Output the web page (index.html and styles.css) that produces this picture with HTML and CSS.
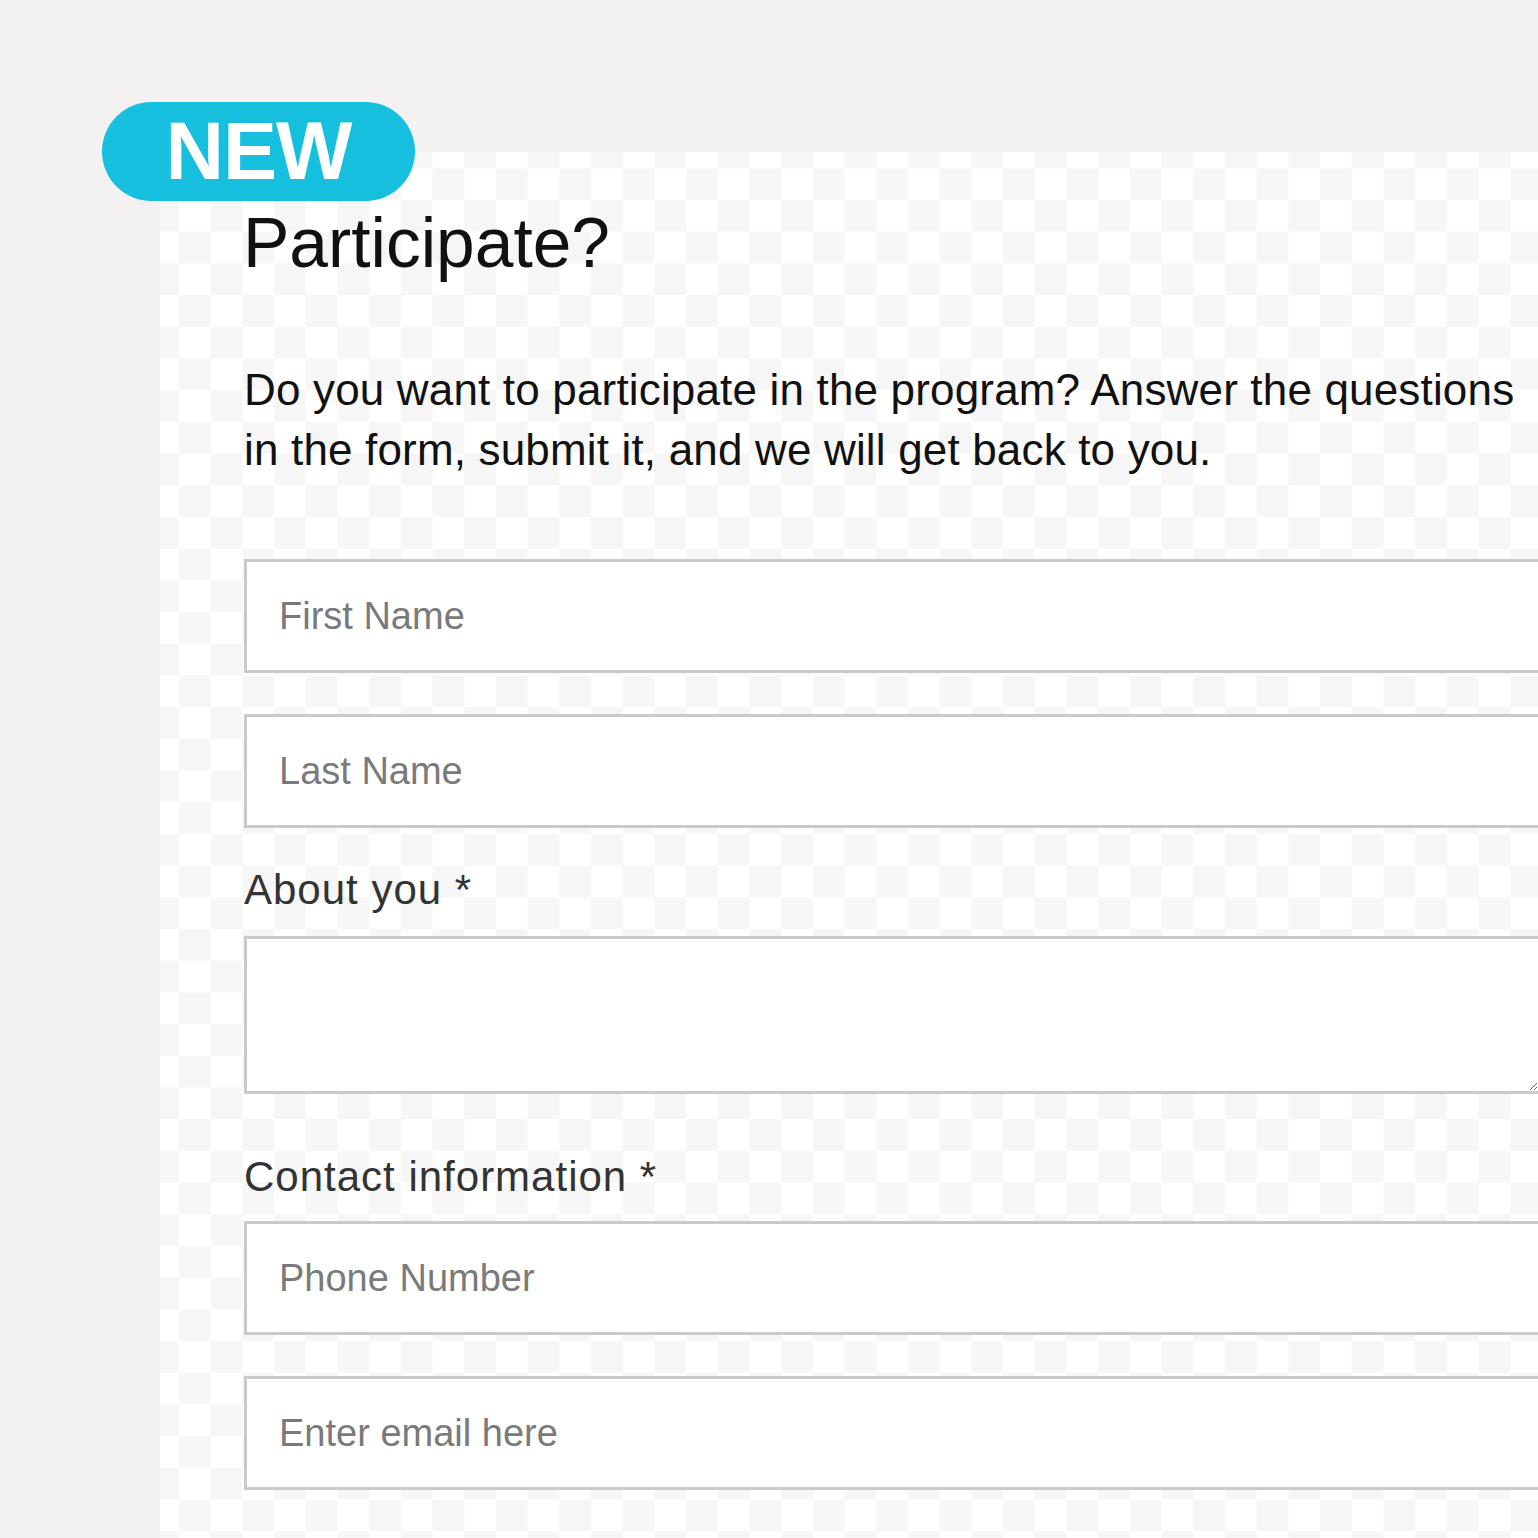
FILE: index.html
```html
<!DOCTYPE html>
<html lang="en">
<head>
<meta charset="utf-8">
<title>Participate?</title>
<link rel="stylesheet" href="styles.css">
</head>
<body>
<div class="badge">NEW</div>
<main class="panel">
  <h1 class="title">Participate?</h1>
  <p class="intro">Do you want to participate in the program? Answer the questions in the form, submit it, and we will get back to you.</p>
  <form class="form">
    <input class="field" type="text" placeholder="First Name">
    <input class="field" type="text" placeholder="Last Name">
    <label class="label label-about" for="about">About you *</label>
    <textarea class="field area" id="about"></textarea>
    <label class="label label-contact" for="phone">Contact information *</label>
    <input class="field" id="phone" type="tel" placeholder="Phone Number">
    <input class="field" type="email" placeholder="Enter email here">
  </form>
</main>
</body>
</html>
```
FILE: styles.css
```css
html, body {
  margin: 0;
  padding: 0;
}
body {
  width: 1538px;
  height: 1538px;
  overflow: hidden;
  background: #f3f1f2;
  font-family: "Liberation Sans", Arial, sans-serif;
  position: relative;
}
.badge {
  position: absolute;
  left: 102px;
  top: 102px;
  width: 313px;
  height: 99px;
  border-radius: 50px;
  background: #16bfdd;
  color: #fff;
  font-weight: 700;
  font-size: 81px;
  letter-spacing: -1px;
  display: flex;
  align-items: center;
  justify-content: center;
  line-height: 1;
  z-index: 2;
}
.panel {
  margin: 152px 0 0 160px;
  height: 1386px;
  box-sizing: border-box;
  padding: 57px 0 0 84px;
  background-color: #fff;
  background-image: repeating-conic-gradient(#f6f6f6 0 25%, #ffffff 0 50%);
  background-size: 63.4px 63.4px;
  background-position: -12.7px 16.3px;
  overflow: hidden;
}
.title {
  margin: 0 0 0 -1px;
  font-size: 69.5px;
  line-height: 69px;
  font-weight: 400;
  color: #111;
}
.intro {
  margin: 82px 0 0;
  width: 1300px;
  font-size: 44px;
  line-height: 60px;
  letter-spacing: 0.17px;
  color: #111;
}
.form {
  display: flex;
  flex-direction: column;
  margin-top: 79px;
}
.field {
  box-sizing: border-box;
  width: 1297px;
  height: 114px;
  margin: 0 0 41px;
  border: 3px solid #cacaca;
  border-radius: 0;
  background: #fff;
  padding: 0 0 0 32px;
  font-family: "Liberation Sans", Arial, sans-serif;
  font-size: 38px;
  color: #333;
  outline: none;
}
.field::placeholder {
  color: #7a7a7a;
}
.area {
  height: 158px;
  resize: both;
}
.label {
  display: block;
  font-size: 42px;
  line-height: 50px;
  letter-spacing: 1px;
  color: #333;
  margin-bottom: 21px;
}
.label-about {
  margin-top: -4px;
}
.label-contact {
  margin-top: 17px;
  margin-bottom: 19px;
}
```
